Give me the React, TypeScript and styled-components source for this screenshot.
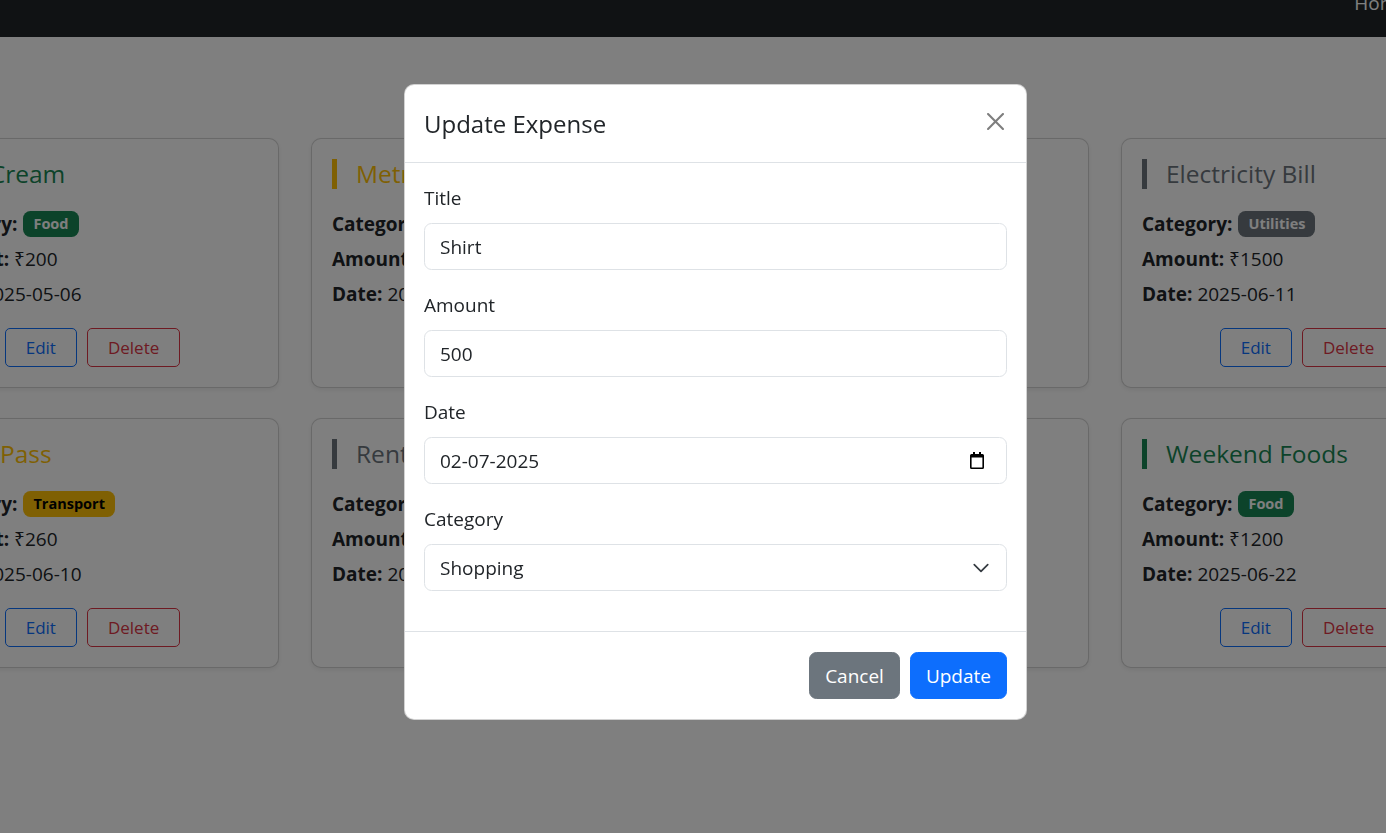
import React from "react";
import styled, { createGlobalStyle } from "styled-components";

const GlobalStyle = createGlobalStyle`
  html, body { margin: 0; padding: 0; }
  body {
    font-family: "Open Sans", "Noto Sans", "DejaVu Sans", sans-serif;
    color: #212529;
    background: #ffffff;
    overflow: hidden;
  }
  * { box-sizing: border-box; }
`;

type Tone = "success" | "warning" | "secondary";

const toneColor: Record<Tone, string> = {
  success: "#198754",
  warning: "#ffc107",
  secondary: "#6c757d",
};

const Page = styled.div`
  width: 1386px;
  height: 833px;
  overflow: hidden;
  background: #ffffff;
`;

const Navbar = styled.nav`
  height: 37px;
  background: #212529;
  display: flex;
  justify-content: flex-end;
  align-items: flex-start;
  overflow: hidden;
`;

const NavLink = styled.a`
  font-size: 19px;
  line-height: 30px;
  margin-top: -12px;
  margin-right: -22px;
  color: #ffffff;
  text-decoration: none;
`;

const Main = styled.main`
  padding-top: 101px;
`;

const Grid = styled.div`
  display: grid;
  grid-template-columns: repeat(4, 373px);
  gap: 30px 32px;
  margin-left: -94px;
`;

const Card = styled.div`
  background: #ffffff;
  border: 1px solid rgba(0, 0, 0, 0.175);
  border-radius: 10px;
  box-shadow: 0 2px 5px rgba(0, 0, 0, 0.075);
  padding: 20px;
  display: flex;
  flex-direction: column;
`;

const CardTitle = styled.h5<{ $tone: Tone }>`
  margin: 0 0 20px;
  font-size: 24.5px;
  font-weight: 500;
  line-height: 30px;
  padding-left: 19px;
  border-left: 5px solid ${(p) => toneColor[p.$tone]};
  color: ${(p) => toneColor[p.$tone]};
  white-space: nowrap;
`;

const InfoLine = styled.p`
  margin: 0 0 5px;
  font-size: 19px;
  line-height: 30px;
  height: 30px;
  display: flex;
  align-items: center;
  gap: 6px;
  white-space: nowrap;
`;

const Label = styled.strong`
  font-weight: 700;
`;

const Badge = styled.span<{ $tone: Tone }>`
  display: inline-block;
  font-size: 14.5px;
  font-weight: 700;
  line-height: 1;
  padding: 5.5px 10px 5.5px;
  border-radius: 7.5px;
  background: ${(p) => toneColor[p.$tone]};
  color: ${(p) => (p.$tone === "warning" ? "#000000" : "#ffffff")};
`;

const Actions = styled.div`
  display: flex;
  justify-content: center;
  gap: 10px;
  margin-top: 14px;
`;

const OutlineButton = styled.button<{ $variant: "primary" | "danger" }>`
  height: 39px;
  padding: 0 20px;
  font-family: inherit;
  font-size: 17px;
  line-height: 26px;
  border-radius: 5px;
  background: transparent;
  border: 1px solid ${(p) => (p.$variant === "primary" ? "#0d6efd" : "#dc3545")};
  color: ${(p) => (p.$variant === "primary" ? "#0d6efd" : "#dc3545")};
`;

const Overlay = styled.div`
  position: fixed;
  inset: 0;
  background: rgba(0, 0, 0, 0.5);
  display: flex;
  align-items: flex-start;
  justify-content: flex-start;
  padding: 84px 0 0 404px;
`;

const Modal = styled.div`
  width: 623px;
  background: #ffffff;
  border: 1px solid rgba(0, 0, 0, 0.175);
  border-radius: 10px;
  overflow: hidden;
`;

const ModalHeader = styled.div`
  display: flex;
  align-items: center;
  justify-content: space-between;
  padding: 20px 19px;
  border-bottom: 1px solid #dee2e6;
`;

const ModalTitle = styled.h5`
  margin: 0;
  font-size: 24px;
  font-weight: 500;
  line-height: 37px;
`;

const CloseButton = styled.button`
  width: 30px;
  height: 30px;
  margin-right: -3px;
  margin-top: -5px;
  padding: 0;
  border: 0;
  background: transparent;
  display: flex;
  align-items: center;
  justify-content: center;
  opacity: 0.5;
  color: #000000;
`;

const ModalBody = styled.div`
  padding: 20px 19px;
`;

const Field = styled.div`
  margin-bottom: 20px;
`;

const FieldLabel = styled.label`
  display: block;
  font-size: 19px;
  line-height: 30px;
  margin-bottom: 10px;
`;

const InputBox = styled.div`
  height: 47px;
  border: 1px solid #dee2e6;
  border-radius: 7.5px;
  display: flex;
  align-items: center;
  padding: 0 15px;
  background: #ffffff;
`;

const TextInput = styled.input`
  flex: 1;
  min-width: 0;
  border: 0;
  outline: none;
  padding: 0;
  font-family: inherit;
  font-size: 19px;
  line-height: 30px;
  color: #212529;
  background: transparent;
`;

const SelectInput = styled.select`
  flex: 1;
  min-width: 0;
  border: 0;
  outline: none;
  padding: 0;
  font-family: inherit;
  font-size: 19px;
  line-height: 30px;
  color: #212529;
  background: transparent;
  appearance: none;
  -webkit-appearance: none;
`;

const CalendarIcon = styled.svg`
  flex: none;
  margin-right: 7px;
`;

const ChevronIcon = styled.svg`
  flex: none;
  margin-right: 1px;
`;

const ModalFooter = styled.div`
  display: flex;
  justify-content: flex-end;
  gap: 10px;
  padding: 20px 19px;
  border-top: 1px solid #dee2e6;
`;

const SolidButton = styled.button<{ $variant: "primary" | "secondary" }>`
  height: 47px;
  padding: 0 15px;
  font-family: inherit;
  font-size: 19px;
  line-height: 30px;
  border-radius: 7.5px;
  border: 1px solid ${(p) => (p.$variant === "primary" ? "#0d6efd" : "#6c757d")};
  background: ${(p) => (p.$variant === "primary" ? "#0d6efd" : "#6c757d")};
  color: #ffffff;
`;

type Expense = {
  title: string;
  category: string;
  tone: Tone;
  amount: number;
  date: string;
};

const expenses: Expense[] = [
  { title: "Ice Cream", category: "Food", tone: "success", amount: 200, date: "2025-05-06" },
  { title: "Metro Card", category: "Transport", tone: "warning", amount: 500, date: "2025-06-01" },
  { title: "Groceries", category: "Food", tone: "success", amount: 850, date: "2025-06-05" },
  { title: "Electricity Bill", category: "Utilities", tone: "secondary", amount: 1500, date: "2025-06-11" },
  { title: "Bus Pass", category: "Transport", tone: "warning", amount: 260, date: "2025-06-10" },
  { title: "Rent", category: "Utilities", tone: "secondary", amount: 8000, date: "2025-06-01" },
  { title: "Movie Night", category: "Food", tone: "success", amount: 450, date: "2025-06-15" },
  { title: "Weekend Foods", category: "Food", tone: "success", amount: 1200, date: "2025-06-22" },
];

function ExpenseCard({ e }: { e: Expense }) {
  return (
    <Card>
      <CardTitle $tone={e.tone}>{e.title}</CardTitle>
      <InfoLine>
        <Label>Category:</Label>
        <Badge $tone={e.tone}>{e.category}</Badge>
      </InfoLine>
      <InfoLine>
        <span>
          <Label>Amount:</Label> ₹{e.amount}
        </span>
      </InfoLine>
      <InfoLine>
        <span>
          <Label>Date:</Label> {e.date}
        </span>
      </InfoLine>
      <Actions>
        <OutlineButton $variant="primary">Edit</OutlineButton>
        <OutlineButton $variant="danger">Delete</OutlineButton>
      </Actions>
    </Card>
  );
}

export default function App() {
  return (
    <>
      <GlobalStyle />
      <Page>
        <Navbar>
          <NavLink href="#">Home</NavLink>
        </Navbar>
        <Main>
          <Grid>
            {expenses.map((e, i) => (
              <ExpenseCard key={i} e={e} />
            ))}
          </Grid>
        </Main>
      </Page>
      <Overlay>
        <Modal>
          <ModalHeader>
            <ModalTitle>Update Expense</ModalTitle>
            <CloseButton aria-label="Close">
              <svg width="17" height="17" viewBox="0 0 16 16" fill="#000">
                <path d="M.293.293a1 1 0 0 1 1.414 0L8 6.586 14.293.293a1 1 0 1 1 1.414 1.414L9.414 8l6.293 6.293a1 1 0 0 1-1.414 1.414L8 9.414l-6.293 6.293a1 1 0 0 1-1.414-1.414L6.586 8 .293 1.707a1 1 0 0 1 0-1.414z" />
              </svg>
            </CloseButton>
          </ModalHeader>
          <ModalBody>
            <Field>
              <FieldLabel>Title</FieldLabel>
              <InputBox>
                <TextInput defaultValue="Shirt" />
              </InputBox>
            </Field>
            <Field>
              <FieldLabel>Amount</FieldLabel>
              <InputBox>
                <TextInput defaultValue="500" />
              </InputBox>
            </Field>
            <Field>
              <FieldLabel>Date</FieldLabel>
              <InputBox>
                <TextInput defaultValue="02-07-2025" />
                <CalendarIcon width="14" height="17" viewBox="0 0 14 17">
                  <path
                    fillRule="evenodd"
                    fill="#000"
                    d="M3 0h2v2h4V0h2v2h1.5A1.5 1.5 0 0 1 14 3.5v12a1.5 1.5 0 0 1-1.5 1.5h-11A1.5 1.5 0 0 1 0 15.5v-12A1.5 1.5 0 0 1 1.5 2H3V0zM1.6 5.6v9.8h10.8V5.6H1.6z"
                  />
                </CalendarIcon>
              </InputBox>
            </Field>
            <Field>
              <FieldLabel>Category</FieldLabel>
              <InputBox>
                <SelectInput defaultValue="Shopping">
                  <option>Food</option>
                  <option>Transport</option>
                  <option>Utilities</option>
                  <option>Shopping</option>
                </SelectInput>
                <ChevronIcon width="18" height="18" viewBox="0 0 16 16">
                  <path d="m2 5 6 6 6-6" fill="none" stroke="#343a40" strokeWidth="1.5" strokeLinecap="round" strokeLinejoin="round" />
                </ChevronIcon>
              </InputBox>
            </Field>
          </ModalBody>
          <ModalFooter>
            <SolidButton $variant="secondary">Cancel</SolidButton>
            <SolidButton $variant="primary">Update</SolidButton>
          </ModalFooter>
        </Modal>
      </Overlay>
    </>
  );
}
